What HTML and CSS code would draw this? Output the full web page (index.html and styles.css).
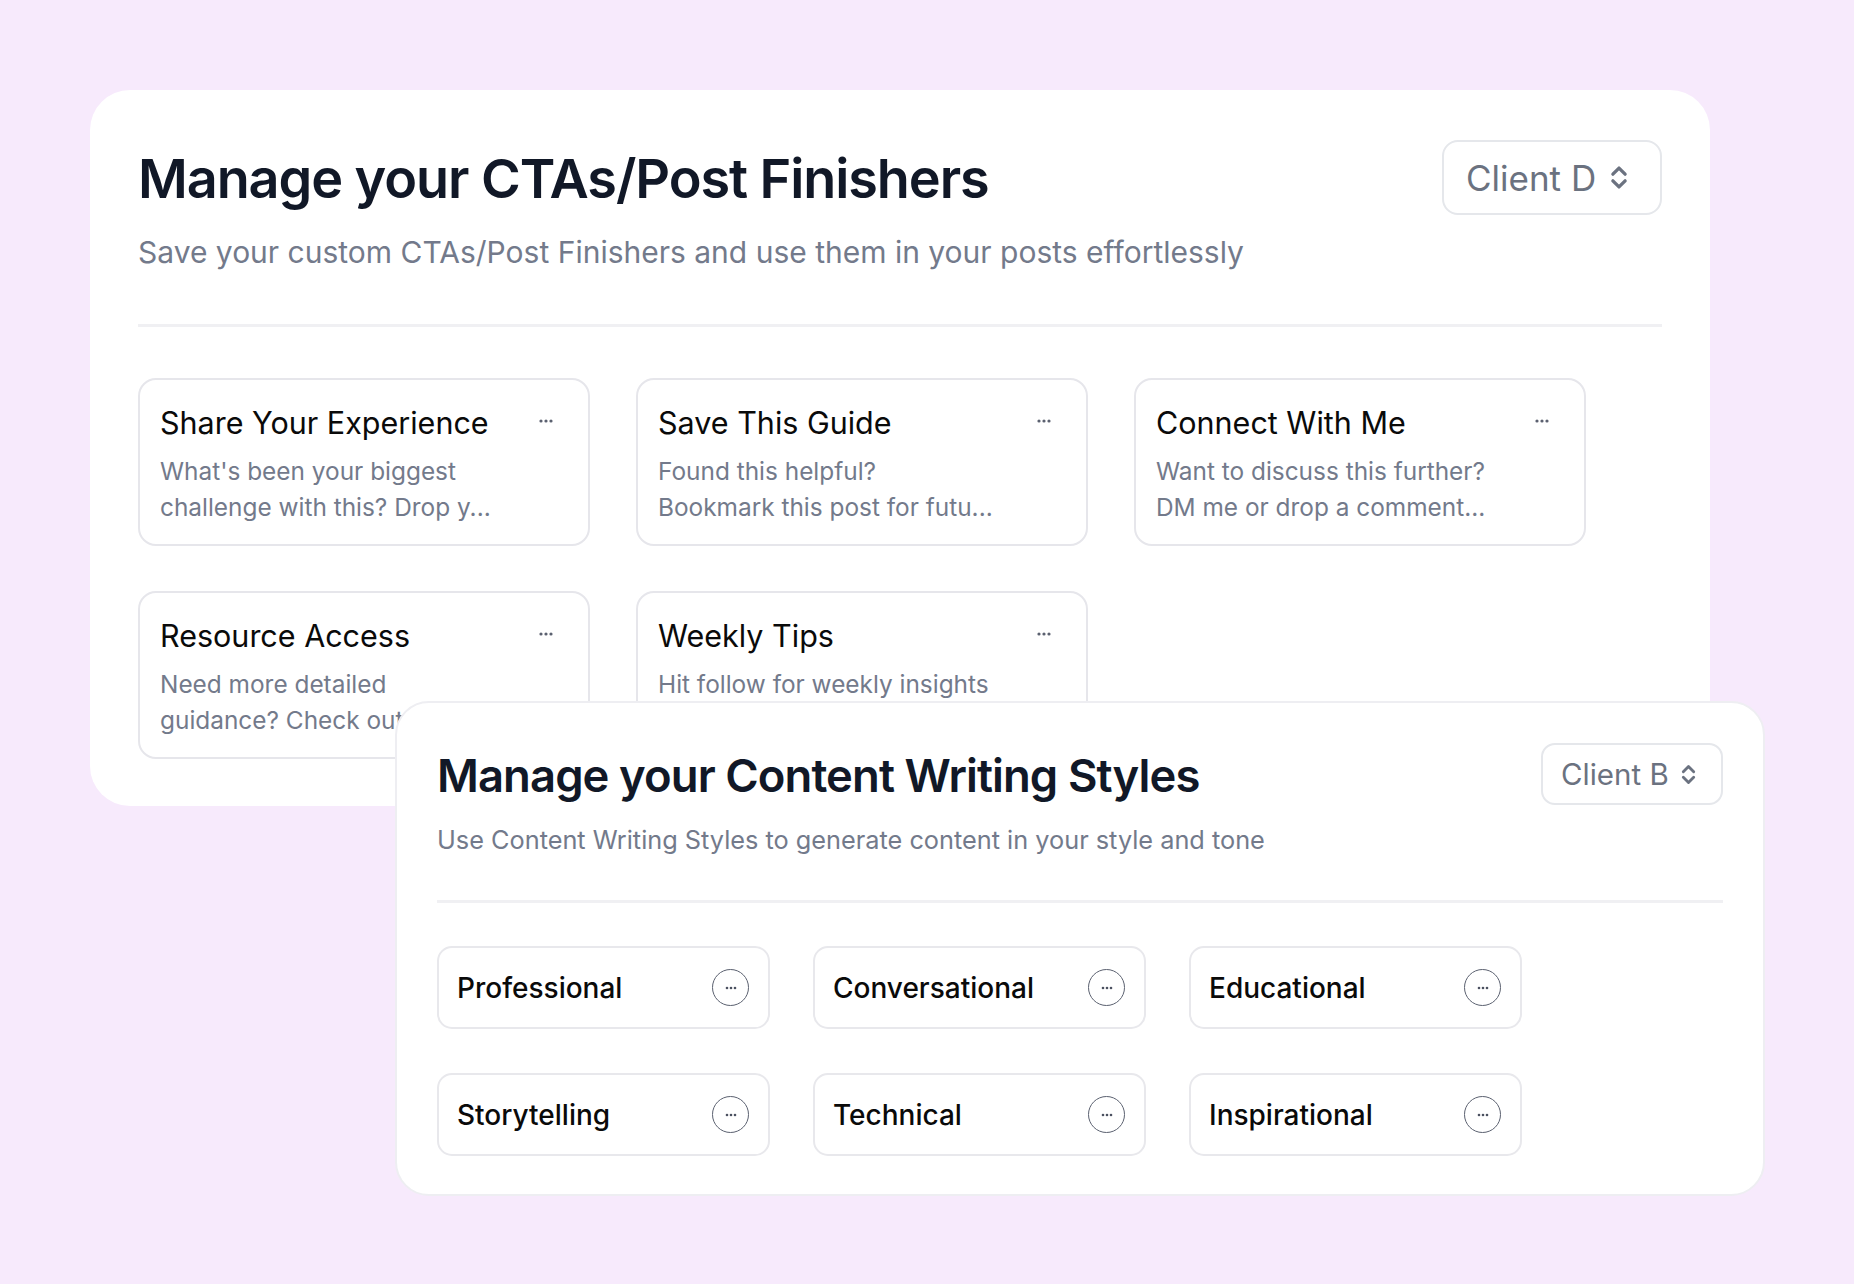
FILE: index.html
```html
<!DOCTYPE html>
<html lang="en">
<head>
<meta charset="utf-8">
<title>Manage CTAs and Writing Styles</title>
<link rel="stylesheet" href="styles.css">
</head>
<body>
<main class="stage">
  <section class="panel panel-cta">
    <header class="panel-head">
      <div class="head-text">
        <h1 class="panel-title">Manage your CTAs/Post Finishers</h1>
        <p class="panel-sub">Save your custom CTAs/Post Finishers and use them in your posts effortlessly</p>
      </div>
      <button class="client-select">
        <span>Client D</span>
        <svg class="chev" viewBox="0 0 18 26" width="20" height="29"><path d="M3.5 10 L9 4.5 L14.5 10 M3.5 16 L9 21.5 L14.5 16" fill="none" stroke="currentColor" stroke-width="3" stroke-linecap="round" stroke-linejoin="round"/></svg>
      </button>
    </header>
    <hr class="divider">
    <div class="cta-grid">
      <article class="cta-card">
        <div class="cta-text">
          <h2 class="cta-title">Share Your Experience</h2>
          <p class="cta-desc">What's been your biggest<br>challenge with this? Drop y...</p>
        </div>
        <svg class="dots" viewBox="0 0 14 4" width="14" height="4"><circle cx="2" cy="2" r="1.6"/><circle cx="7" cy="2" r="1.6"/><circle cx="12" cy="2" r="1.6"/></svg>
      </article>
      <article class="cta-card">
        <div class="cta-text">
          <h2 class="cta-title">Save This Guide</h2>
          <p class="cta-desc">Found this helpful?<br>Bookmark this post for futu...</p>
        </div>
        <svg class="dots" viewBox="0 0 14 4" width="14" height="4"><circle cx="2" cy="2" r="1.6"/><circle cx="7" cy="2" r="1.6"/><circle cx="12" cy="2" r="1.6"/></svg>
      </article>
      <article class="cta-card">
        <div class="cta-text">
          <h2 class="cta-title">Connect With Me</h2>
          <p class="cta-desc">Want to discuss this further?<br>DM me or drop a comment...</p>
        </div>
        <svg class="dots" viewBox="0 0 14 4" width="14" height="4"><circle cx="2" cy="2" r="1.6"/><circle cx="7" cy="2" r="1.6"/><circle cx="12" cy="2" r="1.6"/></svg>
      </article>
      <article class="cta-card">
        <div class="cta-text">
          <h2 class="cta-title">Resource Access</h2>
          <p class="cta-desc">Need more detailed<br>guidance? Check out our...</p>
        </div>
        <svg class="dots" viewBox="0 0 14 4" width="14" height="4"><circle cx="2" cy="2" r="1.6"/><circle cx="7" cy="2" r="1.6"/><circle cx="12" cy="2" r="1.6"/></svg>
      </article>
      <article class="cta-card">
        <div class="cta-text">
          <h2 class="cta-title">Weekly Tips</h2>
          <p class="cta-desc">Hit follow for weekly insights<br>and practical tips...</p>
        </div>
        <svg class="dots" viewBox="0 0 14 4" width="14" height="4"><circle cx="2" cy="2" r="1.6"/><circle cx="7" cy="2" r="1.6"/><circle cx="12" cy="2" r="1.6"/></svg>
      </article>
    </div>
  </section>

  <section class="panel panel-styles">
    <header class="panel-head">
      <div class="head-text">
        <h1 class="panel-title">Manage your Content Writing Styles</h1>
        <p class="panel-sub">Use Content Writing Styles to generate content in your style and tone</p>
      </div>
      <button class="client-select">
        <span>Client B</span>
        <svg class="chev" viewBox="0 0 18 26" width="17" height="25"><path d="M3.5 10 L9 4.5 L14.5 10 M3.5 16 L9 21.5 L14.5 16" fill="none" stroke="currentColor" stroke-width="3" stroke-linecap="round" stroke-linejoin="round"/></svg>
      </button>
    </header>
    <hr class="divider">
    <div class="style-grid">
      <div class="style-card"><span>Professional</span><span class="more"><svg viewBox="0 0 12 4" width="12" height="4"><circle cx="2" cy="2" r="1.3"/><circle cx="6" cy="2" r="1.3"/><circle cx="10" cy="2" r="1.3"/></svg></span></div>
      <div class="style-card"><span>Conversational</span><span class="more"><svg viewBox="0 0 12 4" width="12" height="4"><circle cx="2" cy="2" r="1.3"/><circle cx="6" cy="2" r="1.3"/><circle cx="10" cy="2" r="1.3"/></svg></span></div>
      <div class="style-card"><span>Educational</span><span class="more"><svg viewBox="0 0 12 4" width="12" height="4"><circle cx="2" cy="2" r="1.3"/><circle cx="6" cy="2" r="1.3"/><circle cx="10" cy="2" r="1.3"/></svg></span></div>
      <div class="style-card"><span>Storytelling</span><span class="more"><svg viewBox="0 0 12 4" width="12" height="4"><circle cx="2" cy="2" r="1.3"/><circle cx="6" cy="2" r="1.3"/><circle cx="10" cy="2" r="1.3"/></svg></span></div>
      <div class="style-card"><span>Technical</span><span class="more"><svg viewBox="0 0 12 4" width="12" height="4"><circle cx="2" cy="2" r="1.3"/><circle cx="6" cy="2" r="1.3"/><circle cx="10" cy="2" r="1.3"/></svg></span></div>
      <div class="style-card"><span>Inspirational</span><span class="more"><svg viewBox="0 0 12 4" width="12" height="4"><circle cx="2" cy="2" r="1.3"/><circle cx="6" cy="2" r="1.3"/><circle cx="10" cy="2" r="1.3"/></svg></span></div>
    </div>
  </section>
</main>
</body>
</html>
```

FILE: styles.css
```css
* { box-sizing: border-box; }
html, body { margin: 0; padding: 0; }
body {
  background: #f7eafc;
  font-family: "Inter", "Noto Sans", sans-serif;
  width: 1854px;
  height: 1284px;
  overflow: hidden;
}
.stage {
  padding: 90px 0 0 90px;
}
.panel {
  background: #ffffff;
}
.panel-cta {
  width: 1620px;
  height: 716px;
  border-radius: 40px;
  padding: 50px 48px 0 48px;
}
.panel-styles {
  position: relative;
  z-index: 1;
  width: 1370px;
  height: 495px;
  margin: -105px 0 0 305px;
  border-radius: 34px;
  border: 2px solid #eeeef2;
  padding: 40px 40px 0 40px;
}
.panel-head {
  display: flex;
  justify-content: space-between;
  align-items: flex-start;
}
.panel-title {
  margin: 0;
  color: #111827;
  font-weight: 600;
  letter-spacing: -0.02em;
}
.panel-sub {
  margin: 0;
  color: #737a8b;
  font-weight: 400;
}
.panel-cta .panel-title { font-size: 54px; line-height: 66px; margin-top: 6px; }
.panel-cta .panel-sub { font-size: 30px; line-height: 36px; margin-top: 22px; }
.panel-styles .panel-title { font-size: 45.4px; line-height: 54px; margin-top: 6px; }
.panel-styles .panel-sub { font-size: 25.3px; line-height: 30px; margin-top: 22px; }

.client-select {
  display: flex;
  align-items: center;
  background: #fff;
  border: 2px solid #e5e7eb;
  color: #6b7280;
  font-family: inherit;
  font-weight: 400;
}
.panel-cta .client-select {
  width: 220px;
  height: 75px;
  border-radius: 16px;
  padding: 0 0 0 22px;
  gap: 13px;
  font-size: 35px;
}
.panel-styles .client-select {
  width: 182px;
  height: 62px;
  border-radius: 14px;
  padding: 0 0 0 18px;
  gap: 11px;
  font-size: 29.5px;
}
.chev { display: block; }

.divider {
  border: 0;
  margin: 0;
  background: #f0f0f3;
}
.panel-cta .divider { height: 3px; margin-top: 54px; }
.panel-styles .divider { height: 3px; margin-top: 45px; }

.cta-grid {
  display: grid;
  grid-template-columns: repeat(3, 452px);
  column-gap: 46px;
  row-gap: 45px;
  margin-top: 51px;
}
.cta-card {
  height: 168px;
  border: 2px solid #e6e6eb;
  border-radius: 18px;
  padding: 25px 20px 0 20px;
  display: flex;
  justify-content: space-between;
  align-items: flex-start;
}
.cta-text { width: 340px; }
.cta-title {
  margin: 0;
  font-size: 30.5px;
  line-height: 36px;
  font-weight: 400;
  color: #0a0a0a;
  white-space: nowrap;
}
.cta-desc {
  margin: 12px 0 0 0;
  font-size: 24.4px;
  line-height: 36px;
  color: #737a8b;
  white-space: nowrap;
}
.dots {
  fill: #5b6170;
  margin-top: 14px;
  margin-right: 15px;
}

.style-grid {
  display: grid;
  grid-template-columns: repeat(3, 333px);
  column-gap: 43px;
  row-gap: 44px;
  margin-top: 43px;
}
.style-card {
  height: 83px;
  border: 2px solid #e8e8ec;
  border-radius: 15px;
  padding: 0 19px 0 18px;
  display: flex;
  align-items: center;
  justify-content: space-between;
  font-size: 28px;
  font-weight: 500;
  color: #0a0a0a;
}
.more {
  width: 37px;
  height: 37px;
  border: 1.5px solid #5b6170;
  border-radius: 50%;
  display: flex;
  align-items: center;
  justify-content: center;
}
.more svg { fill: #4b5160; display: block; }
```
